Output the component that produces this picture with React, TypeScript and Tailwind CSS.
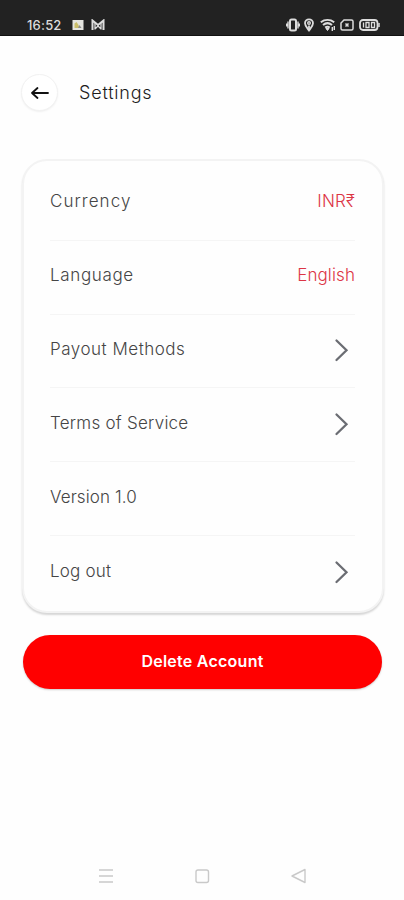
import type { ReactNode } from "react";

type Row = {
  label: string;
  labelClass: string;
  value?: string;
  valueClass?: string;
  arrow?: boolean;
};

const rows: Row[] = [
  { label: "Currency", labelClass: "tracking-[1.05px]", value: "INR₹", valueClass: "tracking-[0.2px]" },
  { label: "Language", labelClass: "tracking-[0.65px]", value: "English", valueClass: "tracking-[0.1px]" },
  { label: "Payout Methods", labelClass: "tracking-[0.52px]", arrow: true },
  { label: "Terms of Service", labelClass: "tracking-[0.25px]", arrow: true },
  { label: "Version 1.0", labelClass: "tracking-[0.1px]" },
  { label: "Log out", labelClass: "tracking-[0.2px]", arrow: true },
];

function StatusBar() {
  return (
    <header className="flex h-9 items-end justify-between bg-[#222222] pr-[24px] pl-[27px] pb-[2px] border-b border-[#111111] text-[#dddddd]">
      <div className="flex h-4 items-center">
        <span className="w-9 text-[13px] leading-4 font-medium tracking-[0.2px]">16:52</span>
        <svg className="ml-[9px]" width="12" height="12" viewBox="0 0 12 12">
          <rect x="0.5" y="1" width="11" height="10" fill="#e4e4df" />
          <path d="M2.5 9V4.5l2-1.5 2 3 1 3z" fill="#c9bd6a" />
          <path d="M6 9l1.5-3L9.500 9z" fill="#8c8c8c" />
        </svg>
        <svg className="ml-[7px]" width="14" height="12" viewBox="0 0 14 12" fill="none" stroke="currentColor">
          <path d="M1.5 11V1.5L7 6l5.5-4.5V11" strokeWidth="2" />
          <path d="M4 10.5V4M10 10.5V4M4 10l3-3 3 3" strokeWidth="1.3" />
        </svg>
      </div>
      <div className="flex h-4 items-center">
        <svg width="14" height="14" viewBox="0 0 14 14" fill="none" stroke="currentColor">
          <rect x="4" y="1.5" width="6" height="11" rx="1.5" strokeWidth="2" />
          <path d="M2 3.5v7M12 3.5v7M.7 5.5v3M13.3 5.5v3" strokeWidth="1.4" />
        </svg>
        <svg className="ml-[4px]" width="10" height="14" viewBox="0 0 10 14" fill="none" stroke="currentColor">
          <path d="M5 12.5C3 9.8 1 8 1 5.3a4 4 0 0 1 8 0C9 8 7 9.8 5 12.5z" strokeWidth="1.8" />
          <circle cx="5" cy="5" r="1.3" strokeWidth="1.4" />
          <path d="M5 7.5v3.5" strokeWidth="1.8" />
        </svg>
        <svg className="ml-[6px]" width="16" height="14" viewBox="0 0 16 14" fill="none" stroke="currentColor">
          <path d="M.8 4.2c4-3 9.4-3 13.4 0M3 7c3-2.5 6-2.5 9 0M5.2 9.6c1.5-1.2 3-1.2 4.5 0" strokeWidth="2" />
          <path d="M6 10.5l1.5 2L9 10.500z" fill="currentColor" />
          <path d="M12.3 9v4M14.3 8v4" strokeWidth="1.4" />
        </svg>
        <svg className="ml-[4px]" width="14" height="14" viewBox="0 0 14 14" fill="none" stroke="currentColor">
          <path d="M4 2h7.5A1.5 1.5 0 0 1 13 3.5v7a1.5 1.5 0 0 1-1.5 1.5h-9A1.5 1.5 0 0 1 1 10.500V5z" strokeWidth="1.5" />
          <path d="M5.5 5.5l3 3M8.5 5.5l-3 3" strokeWidth="1.5" />
        </svg>
        <svg className="ml-[5px]" width="21" height="14" viewBox="0 0 21 14" fill="none" stroke="currentColor">
          <rect x="1" y="2" width="17.5" height="10" rx="3" strokeWidth="1.8" />
          <path d="M20 5v4" strokeWidth="1.5" />
          <path d="M4.5 4.5v5M7 4.5h3v5H7zM12.5 4.5h3v5h-3z" strokeWidth="1.3" />
        </svg>
      </div>
    </header>
  );
}

function Chevron() {
  return (
    <svg width="15" height="24" viewBox="0 0 15 24" fill="none" stroke="#6b6d73" strokeWidth="2.3" strokeLinecap="round">
      <path d="M2.5 2.5L12.5 12.3 2.5 22" />
    </svg>
  );
}

function NavButton({ children }: { children: ReactNode }) {
  return (
    <button className="flex size-5 items-center justify-center">
      <svg width="18" height="18" viewBox="0 0 18 18" fill="none" stroke="#c9c9c9" strokeWidth="1.4">
        {children}
      </svg>
    </button>
  );
}

export default function App() {
  return (
    <div className="flex h-[900px] w-[404px] flex-col bg-[#fefefe] font-['Inter','Liberation_Sans',sans-serif]">
      <StatusBar />

      <div className="mt-[38px] ml-[21px] flex h-[37px] items-center">
        <button className="flex size-[37px] items-center justify-center rounded-full border border-[#f2f2f2] bg-white shadow-[0_1px_2px_rgba(0,0,0,0.06)]">
          <svg width="20" height="16" viewBox="0 0 20 16" fill="none" stroke="#111111" strokeWidth="1.8" strokeLinecap="round" strokeLinejoin="round">
            <path d="M18 8H2M7.5 3L2 8l5.5 5" />
          </svg>
        </button>
        <h1 className="ml-[21px] text-[18px] leading-6 font-light tracking-[0.8px] text-[#1c1c1c]">Settings</h1>
      </div>

      <ul className="mr-[20px] ml-[22px] mt-12 h-[454px] rounded-[25px] border-2 border-[#f3f3f3] bg-[#fefefe] pr-[27px] pl-[26px] pt-[6px] shadow-[0_2px_2px_rgba(0,0,0,0.16)]">
        {rows.map((row) => (
          <li
            key={row.label}
            className="flex h-[73.8px] items-center justify-between border-b border-[#f5f5f5] pb-[4px] text-[17px] leading-6 font-light last:border-b-0"
          >
            <span className={`text-[#454545] ${row.labelClass}`}>{row.label}</span>
            {row.value && <span className={`text-[#dc3545] ${row.valueClass}`}>{row.value}</span>}
            {row.arrow && (
              <span className="mt-[3px] mr-[6px]">
                <Chevron />
              </span>
            )}
          </li>
        ))}
      </ul>

      <button className="mr-[22px] ml-[23px] mt-[22px] h-[54px] rounded-full bg-[#ff0000] pb-[2px] text-[16px] font-semibold tracking-[0.25px] text-white shadow-[0_1px_2px_rgba(0,0,0,0.2)]">
        Delete Account
      </button>

      <nav className="mt-auto mb-[14px] flex justify-between px-[96px]">
        <NavButton>
          <path d="M2 3h14M2 9h14M2 15h14" />
        </NavButton>
        <NavButton>
          <rect x="3" y="3" width="12.5" height="12.5" rx="2" />
        </NavButton>
        <NavButton>
          <path d="M16 2.5v13L3 9z" strokeLinejoin="round" />
        </NavButton>
      </nav>
    </div>
  );
}
